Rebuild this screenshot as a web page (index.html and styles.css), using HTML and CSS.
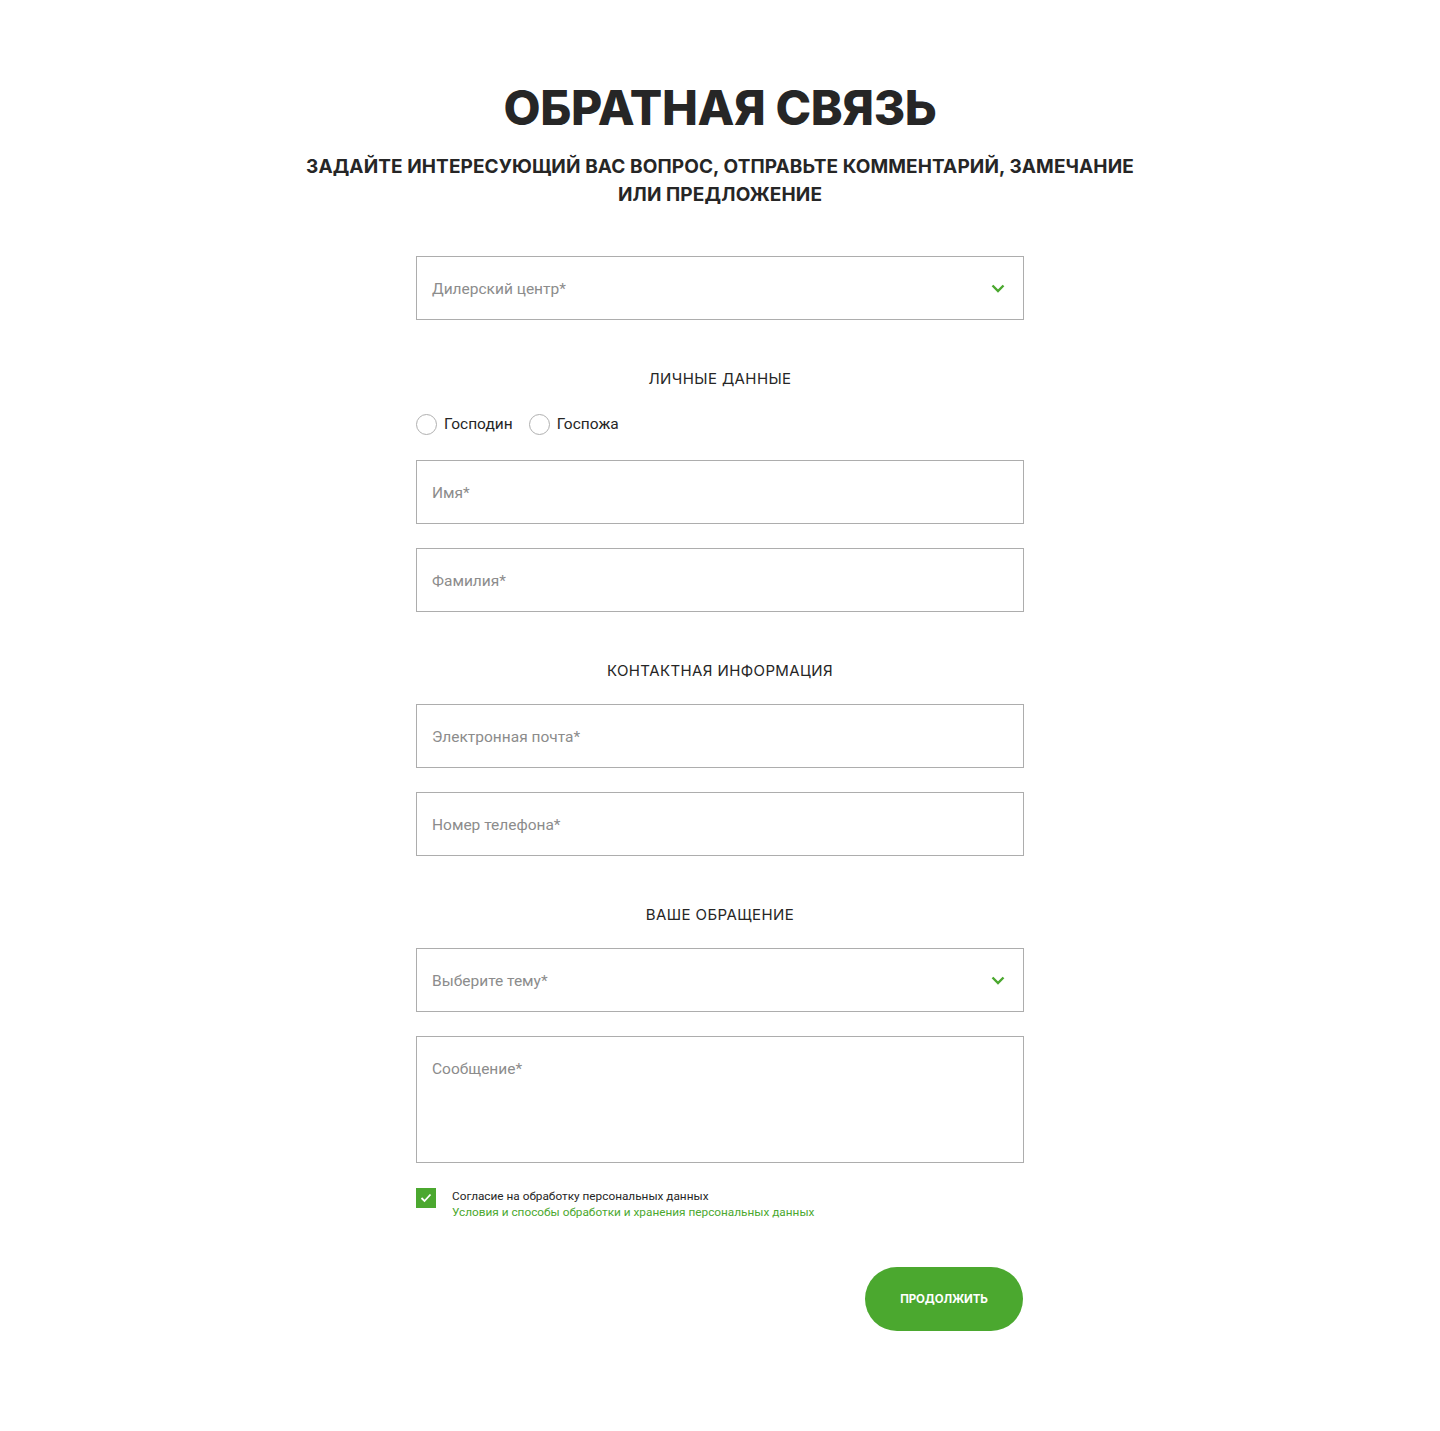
FILE: index.html
```html
<!DOCTYPE html>
<html lang="ru">
<head>
<meta charset="utf-8">
<title>Обратная связь</title>
<link rel="stylesheet" href="styles.css">
</head>
<body>
<main class="page">
  <h1 class="title">ОБРАТНАЯ СВЯЗЬ</h1>
  <p class="subtitle">ЗАДАЙТЕ ИНТЕРЕСУЮЩИЙ ВАС ВОПРОС, ОТПРАВЬТЕ КОММЕНТАРИЙ, ЗАМЕЧАНИЕ<br>ИЛИ ПРЕДЛОЖЕНИЕ</p>

  <form class="form">
    <div class="field select">
      <span class="placeholder">Дилерский центр*</span>
      <svg class="chevron" width="14" height="9" viewBox="0 0 14 9"><path d="M1.5 1.5 L7 7 L12.5 1.5" fill="none" stroke="#4ba82f" stroke-width="2.4"/></svg>
    </div>

    <h2 class="section">ЛИЧНЫЕ ДАННЫЕ</h2>
    <div class="radios">
      <label class="radio"><span class="circle"></span>Господин</label>
      <label class="radio"><span class="circle"></span>Госпожа</label>
    </div>
    <div class="field"><span class="placeholder">Имя*</span></div>
    <div class="field gap"><span class="placeholder">Фамилия*</span></div>

    <h2 class="section section-tight">КОНТАКТНАЯ ИНФОРМАЦИЯ</h2>
    <div class="field"><span class="placeholder">Электронная почта*</span></div>
    <div class="field gap"><span class="placeholder">Номер телефона*</span></div>

    <h2 class="section section-tight">ВАШЕ ОБРАЩЕНИЕ</h2>
    <div class="field select">
      <span class="placeholder">Выберите тему*</span>
      <svg class="chevron" width="14" height="9" viewBox="0 0 14 9"><path d="M1.5 1.5 L7 7 L12.5 1.5" fill="none" stroke="#4ba82f" stroke-width="2.4"/></svg>
    </div>
    <div class="field textarea gap"><span class="placeholder">Сообщение*</span></div>

    <div class="consent">
      <span class="checkbox">
        <svg width="12" height="10" viewBox="0 0 12 10"><path d="M1.5 5 L4.5 8 L10.5 1.5" fill="none" stroke="#fff" stroke-width="1.8"/></svg>
      </span>
      <div class="consent-text">
        <div>Согласие на обработку персональных данных</div>
        <div class="link">Условия и способы обработки и хранения персональных данных</div>
      </div>
    </div>

    <div class="actions">
      <button type="button" class="btn">ПРОДОЛЖИТЬ</button>
    </div>
  </form>
</main>
</body>
</html>
```

FILE: styles.css
```css
* { box-sizing: border-box; }
html, body { margin: 0; padding: 0; background: #fff; }
body { font-family: "Inter", "Open Sans", sans-serif; color: #262626; }

.page {
  display: flex;
  flex-direction: column;
  align-items: center;
  padding-top: 78px;
  padding-bottom: 100px;
}

.title {
  margin: 0;
  font-family: "Inter", sans-serif;
  font-weight: 800;
  font-size: 48px;
  line-height: 60px;
  letter-spacing: -0.4px;
  color: #262626;
}

.subtitle {
  margin: 15px 0 0;
  font-family: "Inter", sans-serif;
  font-weight: 700;
  font-size: 19px;
  line-height: 28px;
  text-align: center;
  letter-spacing: 0.1px;
  color: #262626;
}

.form {
  width: 608px;
  margin-top: 47px;
  display: flex;
  flex-direction: column;
}

.field {
  height: 64px;
  border: 1px solid #adadad;
  display: flex;
  align-items: center;
  padding: 1px 15px 0;
  justify-content: space-between;
}
.field.gap { margin-top: 24px; }

.placeholder {
  font-family: "Roboto", sans-serif;
  font-size: 15.5px;
  color: #8c8c8c;
}

.chevron { margin-right: 3px; }

.textarea {
  height: 127px;
  align-items: flex-start;
  padding-top: 23px;
}

.section {
  margin: 49px 0 25px;
  font-family: "Inter", sans-serif;
  font-weight: 400;
  font-size: 15px;
  line-height: 20px;
  text-align: center;
  color: #262626;
  letter-spacing: 0.4px;
}
.section-tight { margin-bottom: 23px; }

.radios {
  display: flex;
  gap: 16px;
  height: 20px;
  margin-bottom: 26px;
}
.radio {
  display: flex;
  align-items: center;
  gap: 7px;
  font-family: "Roboto", sans-serif;
  font-size: 15.5px;
  color: #262626;
}
.circle {
  width: 21px;
  height: 21px;
  border: 1px solid #b0b0b0;
  border-radius: 50%;
  background: #fff;
}

.consent {
  display: flex;
  margin-top: 24px;
  gap: 16px;
}
.checkbox {
  width: 20px;
  height: 20px;
  margin-top: 1px;
  background: #4ba82f;
  display: flex;
  align-items: center;
  justify-content: center;
}
.consent-text {
  padding-top: 1px;
  font-family: "Roboto", sans-serif;
  font-size: 11.8px;
  line-height: 16px;
  color: #262626;
}
.consent-text .link { color: #4ba82f; }

.actions {
  display: flex;
  justify-content: flex-end;
  margin-top: 47px;
}
.btn {
  width: 158px;
  height: 64px;
  margin-right: 1px;
  border: none;
  border-radius: 32px;
  background: #4ba82f;
  color: #fff;
  font-family: "Inter", sans-serif;
  font-weight: 700;
  font-size: 11.5px;
  letter-spacing: -0.1px;
  cursor: pointer;
}
```
